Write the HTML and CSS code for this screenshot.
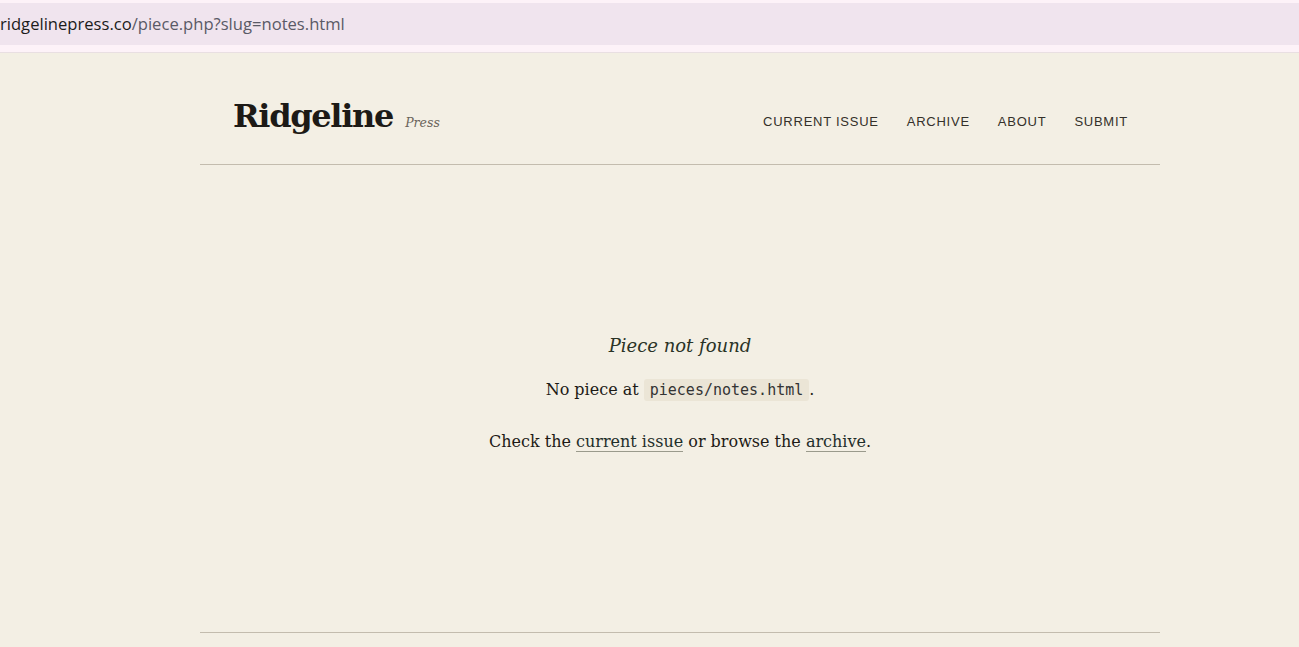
FILE: index.html
```html
<!DOCTYPE html>
<html lang="en">
<head>
    <meta charset="UTF-8">
    <meta name="viewport" content="width=device-width, initial-scale=1.0">
    <title>Piece not found - Ridgeline Press</title>
    <link rel="stylesheet" href="styles.css">
</head>
<body>
    <div class="addressbar">
        <div class="url"><span class="host">ridgelinepress.co</span>/piece.php?slug=notes.html</div>
    </div>

    <div class="page">
        <header class="site-header">
            <div class="brand">
                <span class="brand-name">Ridgeline</span>
                <span class="brand-sub">Press</span>
            </div>
            <nav class="nav">
                <a href="#">Current Issue</a>
                <a href="#">Archive</a>
                <a href="#">About</a>
                <a href="#">Submit</a>
            </nav>
        </header>

        <main class="notfound">
            <h2>Piece not found</h2>
            <p>No piece at <code>pieces/notes.html</code>.</p>
            <p class="hint">Check the <a href="#">current issue</a> or browse the <a href="#">archive</a>.</p>
        </main>

        <footer class="site-footer"></footer>
    </div>
</body>
</html>
```

FILE: styles.css
```css
html, body {
    margin: 0;
    padding: 0;
}
body {
    background-color: #f3efe4;
    color: #1d1a16;
    font-family: "DejaVu Serif", Georgia, serif;
    height: 647px;
    overflow: hidden;
}
.addressbar {
    background-color: #fdf2f8;
    padding-top: 3px;
    border-bottom: 1px solid #e9dfe2;
}
.url {
    background-color: #f0e4ee;
    height: 42px;
    line-height: 42px;
    font-family: "Open Sans", "Noto Sans", sans-serif;
    font-size: 16.6px;
    color: #5a5a66;
    margin-bottom: 7px;
    white-space: nowrap;
}
.url .host {
    color: #1b1b1b;
}
.page {
    width: 960px;
    margin-left: 200px;
}
.site-header {
    display: flex;
    justify-content: space-between;
    align-items: flex-end;
    padding: 44px 32px 29px 33px;
    border-bottom: 1px solid #c3bcae;
}
.brand-name {
    font-weight: bold;
    font-size: 32px;
    color: #1d1a16;
    letter-spacing: -1.3px;
}
.brand-sub {
    font-style: italic;
    font-size: 12.5px;
    color: #6b655b;
    margin-left: 7px;
}
.nav {
    display: flex;
    gap: 28px;
    padding-bottom: 6px;
}
.nav a {
    font-family: "Liberation Sans", Arial, sans-serif;
    font-size: 13px;
    text-transform: uppercase;
    letter-spacing: 0.75px;
    color: #34302a;
    text-decoration: none;
}
.notfound {
    height: 467px;
    box-sizing: border-box;
    padding-top: 169px;
    text-align: center;
}
.notfound h2 {
    font-style: italic;
    font-weight: normal;
    font-size: 18px;
    line-height: 24px;
    color: #2a3326;
    margin: 0 0 19px;
}
.notfound p {
    font-size: 16px;
    line-height: 26px;
    margin: 0 0 26px;
}
.notfound code {
    font-family: "DejaVu Sans Mono", monospace;
    font-size: 15px;
    background-color: #ebe5d6;
    padding: 2px 6px;
    border-radius: 3px;
    color: #333;
}
.notfound a {
    color: #1f2e2a;
    text-decoration: none;
    border-bottom: 1px solid #9a9a8c;
}
.site-footer {
    border-top: 1px solid #c3bcae;
}
```
